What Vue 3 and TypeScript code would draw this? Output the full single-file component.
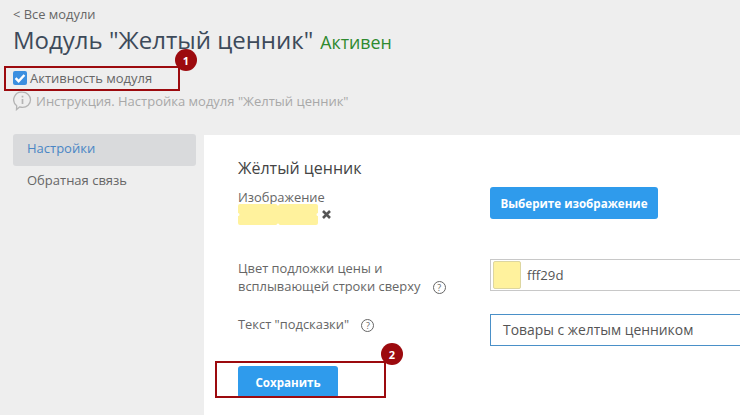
<script setup lang="ts">
const menu: string[] = ['Настройки', 'Обратная связь']
</script>

<template>
  <div class="page">
    <header class="head">
      <a class="back">&lt; Все модули</a>
      <div class="title-row">
        <h1>Модуль "Желтый ценник"</h1>
        <span class="status">Активен</span>
      </div>
      <label class="active-row">
        <span class="check">
          <svg width="14" height="14" viewBox="0 0 14 14"><path d="M2.6 7.2 5.6 10.2 11.4 4" fill="none" stroke="#fff" stroke-width="2.4"/></svg>
        </span>
        Активность модуля
      </label>
      <div class="hint">
        <svg width="19" height="20" viewBox="0 0 19 20" fill="none" stroke="#b4b4b4" stroke-width="1.3">
          <path d="M9.5 1.2a8 7.6 0 0 1 0 15.2c-1 0-2-.2-2.9-.5L3.5 18.6l.2-3.9A7.6 7.6 0 0 1 9.5 1.2z"/>
          <path d="M9.5 8v5M9.5 4.8v1.6" stroke-width="1.7"/>
        </svg>
        Инструкция. Настройка модуля "Желтый ценник"
      </div>
    </header>

    <div class="columns">
      <nav class="side">
        <a v-for="(item, i) in menu" :key="item" class="side-item" :class="{ on: i === 0 }">{{ item }}</a>
      </nav>
      <main class="panel">
        <h2>Жёлтый ценник</h2>
        <div class="row row-img">
          <div class="label-col">
            <div class="lbl">Изображение</div>
            <div class="img-line">
              <svg class="stamp" width="80" height="21" viewBox="0 0 80 21">
                <path fill="#fff29d" d="M2 0H38.5a1.5 1.5 0 0 0 3 0H78a2 2 0 0 1 2 2V9a1.5 1.5 0 0 0 0 3V19a2 2 0 0 1-2 2H41.5a1.5 1.5 0 0 0-3 0H2a2 2 0 0 1-2-2V12a1.5 1.5 0 0 0 0-3V2a2 2 0 0 1 2-2z"/>
              </svg>
              <svg width="11" height="11" viewBox="0 0 11 11"><path d="M2 2 9 9M9 2 2 9" stroke="#555" stroke-width="2.6"/></svg>
            </div>
          </div>
          <button class="btn pick">Выберите изображение</button>
        </div>
        <div class="row row-color">
          <div class="label-col lbl">
            Цвет подложки цены и<br>всплывающей строки сверху
            <span class="q">?</span>
          </div>
          <div class="color-field">
            <span class="swatch"></span>
            <span>fff29d</span>
          </div>
        </div>
        <div class="row row-text">
          <div class="label-col lbl">Текст "подсказки" <span class="q">?</span></div>
          <div class="text-field">Товары с желтым ценником</div>
        </div>
        <button class="btn save">Сохранить</button>
      </main>
    </div>

    <div class="mark mark-1"></div>
    <div class="badge badge-1">1</div>
    <div class="mark mark-2"></div>
    <div class="badge badge-2">2</div>
  </div>
</template>

<style scoped>
.page {
  position: relative;
  width: 740px;
  height: 415px;
  overflow: hidden;
  background: #eeeeee;
  font-family: "Open Sans", sans-serif;
  font-size: 13px;
  color: #666;
}
.head { padding: 6px 0 0 13px; height: 135px; box-sizing: border-box; }
.back { display: block; font-size: 12.9px; line-height: 16px; color: #666; }
.title-row { display: flex; align-items: baseline; gap: 7px; height: 33px; margin-top: 1px; }
h1 { margin: 0; font-size: 24px; font-weight: 400; line-height: 33px; color: #3d4a5a; }
.status { font-size: 17.8px; color: #2f8a2f; }
.active-row { display: flex; align-items: center; gap: 3px; margin-top: 12px; height: 20px; font-size: 13px; color: #666; }
.check {
  width: 14px; height: 14px; border-radius: 2px; background: #3b8fe0;
  display: flex;
}
.hint { display: flex; align-items: center; gap: 4px; margin-top: 2px; height: 22px; color: #a8a8a8; font-size: 13px; }
.columns { display: flex; height: 280px; }
.side { width: 183px; margin-left: 13px; margin-top: -1px; flex: none; }
.side-item {
  display: block; height: 32px; line-height: 28px; padding-left: 14px; border-radius: 3px;
  font-size: 13px; color: #666;
}
.side-item.on { background: #d9dadc; color: #4a86c5; }
.panel { flex: 1; margin-left: 8px; background: #fff; padding: 22px 0 0 34px; }
h2 { margin: 0; font-size: 16px; font-weight: 400; line-height: 22px; color: #444; }
.lbl { font-size: 12.9px; line-height: 18px; color: #666; }
.row { display: flex; }
.label-col { width: 252px; flex: none; }
.row-img { margin-top: 9px; height: 61px; }
.img-line { display: flex; align-items: center; gap: 3px; margin-top: -2px; }
.stamp { flex: none; }
.btn {
  border: 0; border-radius: 3px; background: #2f9bec; color: #fff;
  font-family: inherit; font-size: 11.6px; font-weight: 700; padding: 0;
}
.pick { width: 168px; height: 32px; margin-top: -1px; }
.row-color { margin-top: 10px; height: 32px; }
.q {
  display: inline-flex; align-items: center; justify-content: center;
  width: 11px; height: 11px; margin-left: 9px; border: 1px solid #666; border-radius: 50%;
  font-size: 9px; line-height: 1; vertical-align: 0;
}
.color-field {
  flex: 1; height: 32px; box-sizing: border-box; border: 1px solid #c8c8c8; border-right: 0;
  display: flex; align-items: center; gap: 6px; padding-left: 2px; font-size: 13.2px; color: #555;
}
.swatch { width: 28px; height: 28px; box-sizing: border-box; background: #fff29d; border: 1px solid #ddd6a0; border-radius: 2px; }
.row-text { margin-top: 23px; height: 32px; }
.row-text .label-col { padding-top: 1px; }
.text-field {
  flex: 1; height: 32px; box-sizing: border-box; border: 1px solid #4a90c8; border-right: 0;
  padding-left: 12px; line-height: 30px; font-size: 13.9px; color: #555;
}
.save { display: block; width: 100px; height: 32px; margin-top: 20px; }
.mark { position: absolute; border: 2px solid #9c0a0e; box-sizing: border-box; }
.mark-1 { left: 4px; top: 66px; width: 176px; height: 25px; }
.mark-2 { left: 215px; top: 361px; width: 171px; height: 37px; }
.badge {
  position: absolute; width: 22px; height: 22px; border-radius: 50%; background: #9c0a0e; color: #fff;
  font-size: 11px; font-weight: 700; display: flex; align-items: center; justify-content: center;
}
.badge-1 { left: 175px; top: 49px; }
.badge-2 { left: 381px; top: 343px; }
</style>
